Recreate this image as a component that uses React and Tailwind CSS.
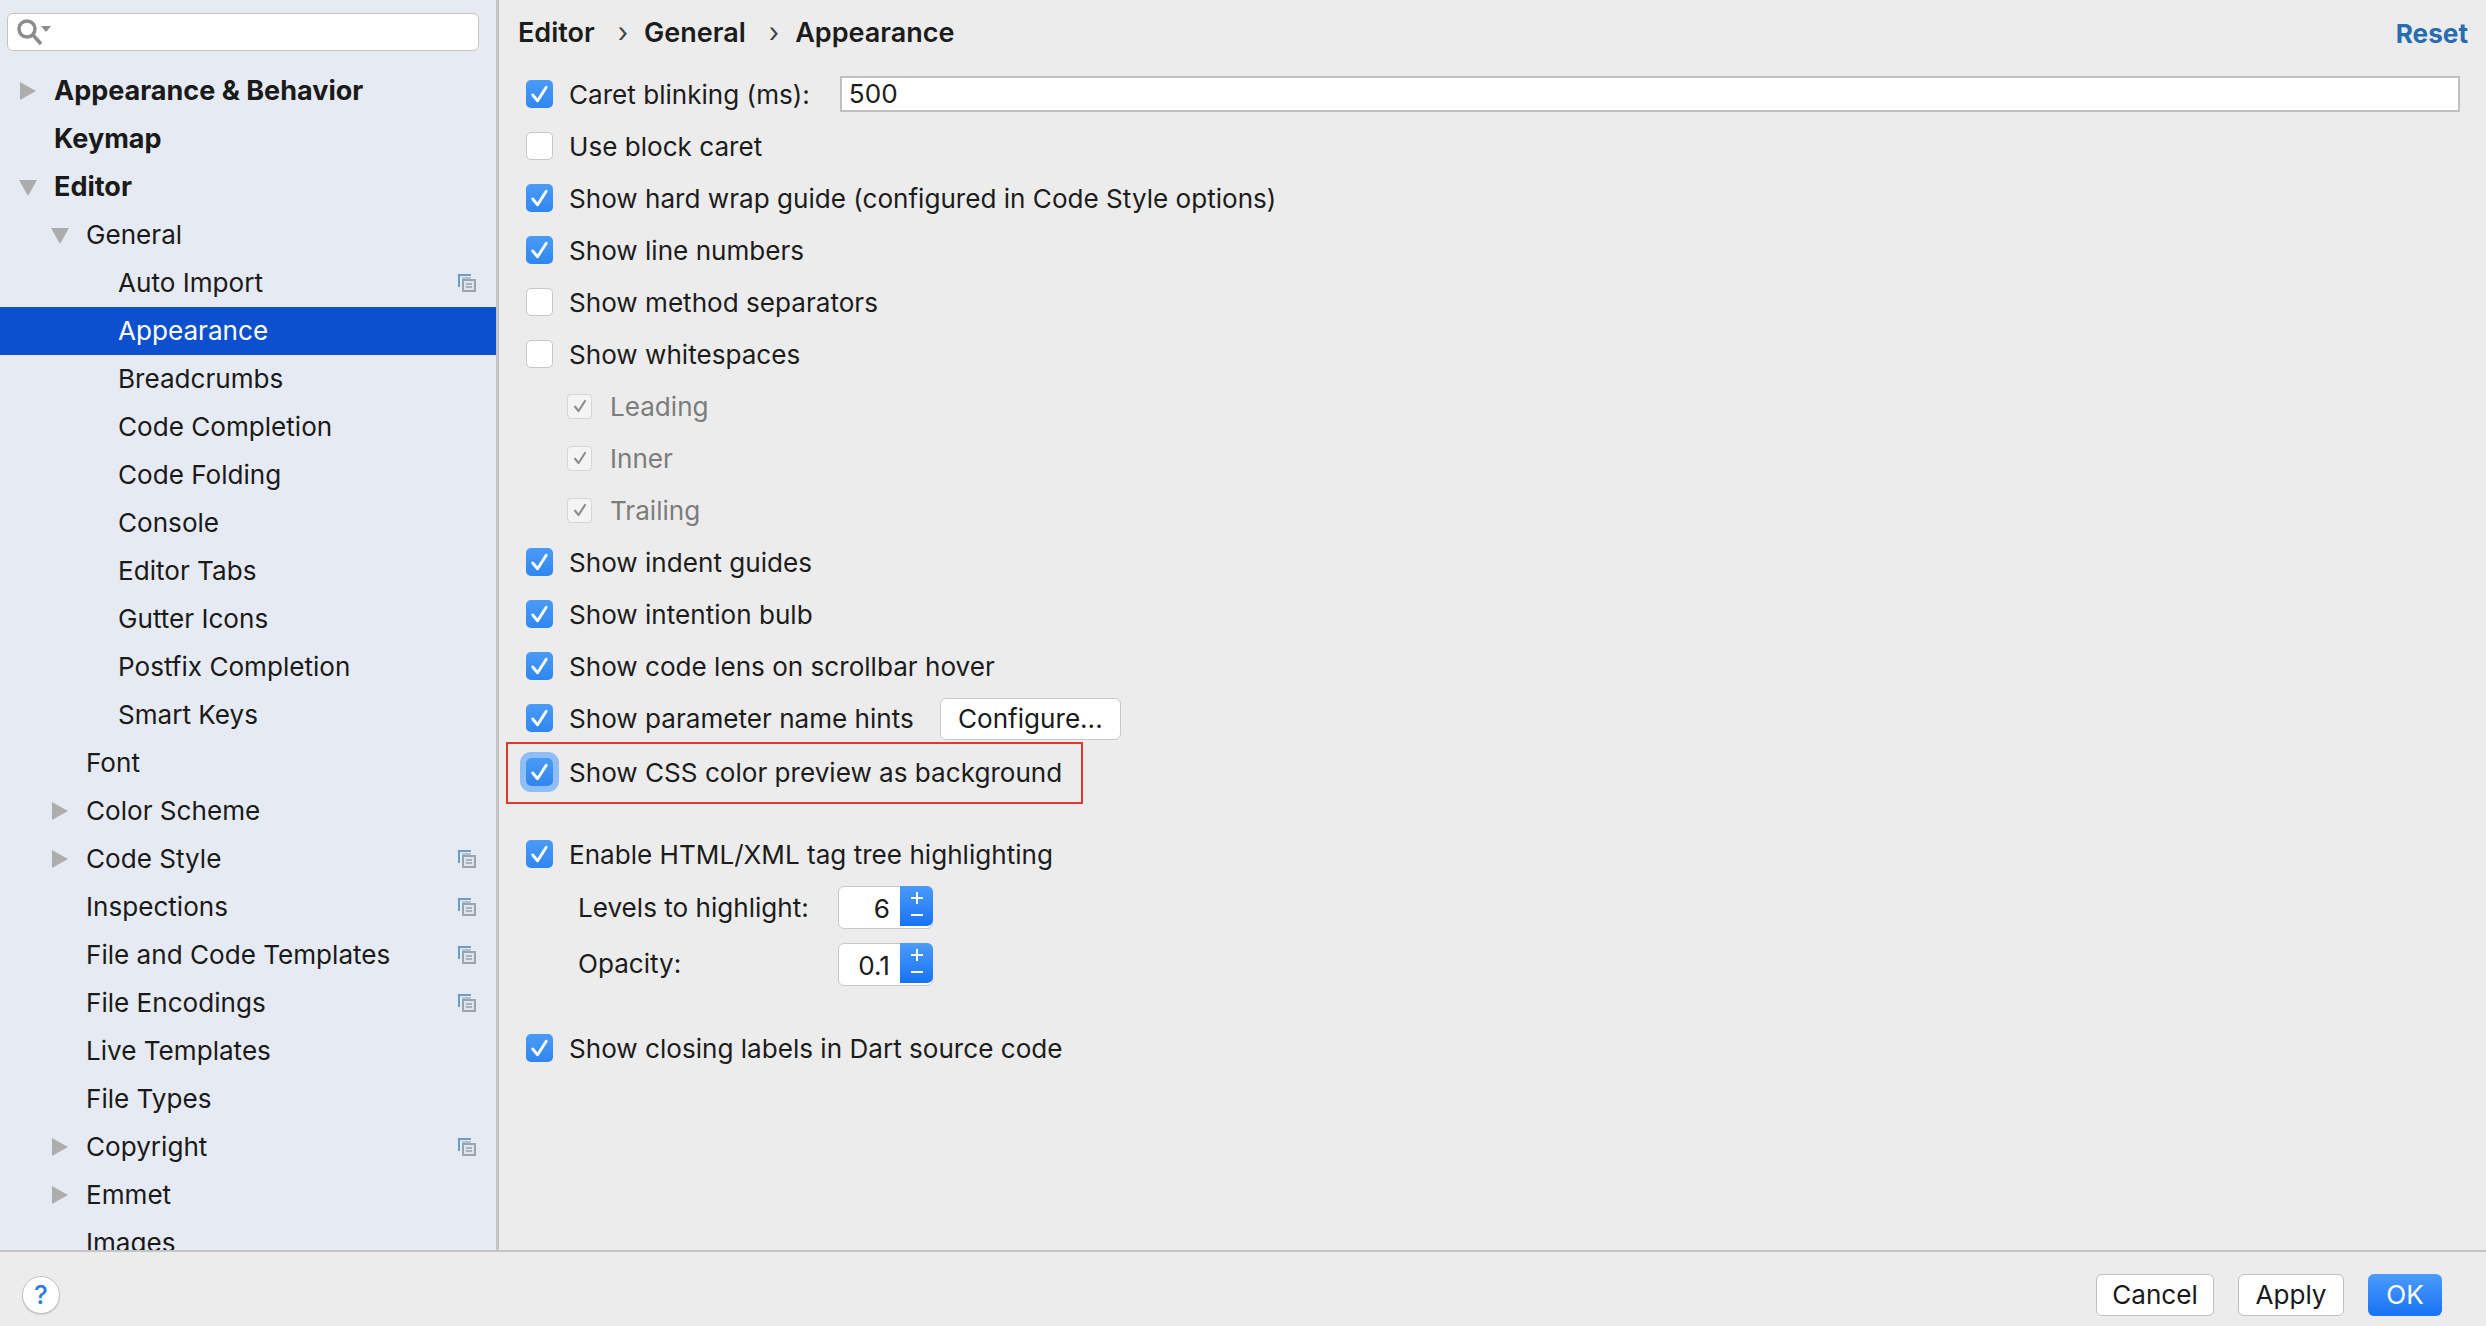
import React from 'react';

const tree = [
  { label: 'Appearance & Behavior', depth: 0, bold: true, arrow: 'right' },
  { label: 'Keymap', depth: 0, bold: true },
  { label: 'Editor', depth: 0, bold: true, arrow: 'down' },
  { label: 'General', depth: 1, arrow: 'down' },
  { label: 'Auto Import', depth: 2, stack: true },
  { label: 'Appearance', depth: 2, selected: true },
  { label: 'Breadcrumbs', depth: 2 },
  { label: 'Code Completion', depth: 2 },
  { label: 'Code Folding', depth: 2 },
  { label: 'Console', depth: 2 },
  { label: 'Editor Tabs', depth: 2 },
  { label: 'Gutter Icons', depth: 2 },
  { label: 'Postfix Completion', depth: 2 },
  { label: 'Smart Keys', depth: 2 },
  { label: 'Font', depth: 1 },
  { label: 'Color Scheme', depth: 1, arrow: 'right' },
  { label: 'Code Style', depth: 1, arrow: 'right', stack: true },
  { label: 'Inspections', depth: 1, stack: true },
  { label: 'File and Code Templates', depth: 1, stack: true },
  { label: 'File Encodings', depth: 1, stack: true },
  { label: 'Live Templates', depth: 1 },
  { label: 'File Types', depth: 1 },
  { label: 'Copyright', depth: 1, arrow: 'right', stack: true },
  { label: 'Emmet', depth: 1, arrow: 'right' },
  { label: 'Images', depth: 1 },
];

function Arrow({ dir }) {
  return (
    <svg width="18" height="18" viewBox="0 0 18 18" className="shrink-0 text-[#adadad]" fill="currentColor">
      {dir === 'right' ? <path d="M1 0 L17 9 L1 18 Z" /> : <path d="M0 2 L18 2 L9 18 Z" />}
    </svg>
  );
}

function StackIcon() {
  return (
    <svg width="18" height="18" viewBox="0 0 18 18" className="shrink-0" fill="none">
      <path d="M1 13 V1 H13" stroke="#6d9ec6" strokeWidth="2" />
      <path d="M4 4 H13" stroke="#6d9ec6" strokeWidth="1" />
      <rect x="5" y="6" width="12" height="11" fill="#dfe3ea" stroke="#9aa5ae" strokeWidth="2" />
      <path d="M8 10 H14 M8 13 H14" stroke="#9aa5ae" strokeWidth="1.5" />
    </svg>
  );
}

function TreeRow({ item }) {
  return (
    <div className={`flex h-[48px] shrink-0 items-center pr-[20px] ${item.selected ? 'bg-[#0c50cf] text-white' : 'text-[#1a1a1a]'}`}>
      <div className={`flex h-full items-center ${item.depth === 0 ? 'w-[54px] pl-[19px]' : item.depth === 1 ? 'w-[86px] pl-[51px]' : 'w-[118px]'}`}>
        {item.arrow && <Arrow dir={item.arrow} />}
      </div>
      <span className={`flex-1 ${item.bold ? 'pt-[1px] text-[27px] font-bold' : 'pb-[1px]'}`}>{item.label}</span>
      {item.stack && <StackIcon />}
    </div>
  );
}

function Check({ color = '#ffffff' }) {
  return (
    <svg width="28" height="28" viewBox="0 0 28 28" fill="none">
      <path d="M7 15 L12 21 L21 7" stroke={color} strokeWidth="3" strokeLinecap="round" strokeLinejoin="round" />
    </svg>
  );
}

function Checkbox({ checked, focus }) {
  if (checked) {
    return (
      <div className={`flex h-[28px] w-[27px] shrink-0 items-center justify-center rounded-[5px] bg-gradient-to-b from-[#4a9bf6] to-[#2f86ef] ${focus ? 'ring-[6px] ring-[#8fbdf6]' : ''}`}>
        <Check />
      </div>
    );
  }
  return <div className="h-[28px] w-[27px] shrink-0 rounded-[5px] border border-[#c6c6c6] bg-white" />;
}

function OptionRow({ label, checked, className = '', children, focus }) {
  return (
    <div className={`flex h-[52px] items-center ${className}`}>
      <Checkbox checked={checked} focus={focus} />
      <span className="ml-[16px] whitespace-nowrap pt-[2px]">{label}</span>
      {children}
    </div>
  );
}

function SubOption({ label }) {
  return (
    <div className="flex h-[52px] items-center pl-[41px] text-[#7c7c7c]">
      <div className="flex h-[25px] w-[25px] shrink-0 items-center justify-center rounded-[4px] border border-[#d6d6d6] bg-[#f4f4f4]">
        <svg width="20" height="20" viewBox="0 0 28 28" fill="none">
          <path d="M7 15 L12 21 L21 7" stroke="#8d8d8d" strokeWidth="3" strokeLinecap="round" strokeLinejoin="round" />
        </svg>
      </div>
      <span className="ml-[18px] pt-[2px]">{label}</span>
    </div>
  );
}

function Spinner({ value }) {
  return (
    <div className="relative h-[43px] w-[95px] rounded-[6px] border border-[#c8c8c8] bg-white">
      <span className="absolute right-[42px] top-[6px] leading-[32px]">{value}</span>
      <div className="absolute right-[-1px] top-[-1px] flex h-[40px] w-[33px] flex-col items-center justify-center rounded-r-[6px] bg-gradient-to-b from-[#4a9bfb] to-[#1672f5]">
        <svg width="14" height="32" viewBox="0 0 14 32" fill="none" stroke="#ffffff" strokeWidth="2">
          <path d="M1 8 H13 M7 2 V14 M1 25 H13" />
        </svg>
      </div>
    </div>
  );
}

function Button({ children, className = '' }) {
  return (
    <button className={`flex h-[42px] items-center justify-center rounded-[6px] border border-[#bfbfbf] bg-white text-[#1a1a1a] ${className}`}>
      {children}
    </button>
  );
}

export default function App() {
  return (
    <div className="flex h-[1326px] w-[2486px] flex-col overflow-hidden bg-[#ececec] text-[26.1px] text-[#1c1c1c]" style={{ fontFamily: 'Inter, "Liberation Sans", sans-serif' }}>
      <div className="flex h-[1252px] shrink-0 border-b-2 border-[#c4c4c4]">
        {/* Settings tree */}
        <aside className="flex w-[499px] shrink-0 flex-col overflow-hidden border-r-[3px] border-[#c4c4c4] bg-[#e6eaf2]">
          <div className="h-[67px] shrink-0 pl-[7px] pr-[17px] pt-[13px]">
            <div className="flex h-[38px] items-center rounded-[6px] border border-[#c4c4c4] bg-white pl-[8px]">
              <svg width="36" height="28" viewBox="0 0 36 28" fill="none">
                <circle cx="11" cy="11" r="8" stroke="#8c8c8c" strokeWidth="3.5" />
                <path d="M17 17 L25 26" stroke="#8c8c8c" strokeWidth="3.5" />
                <path d="M25 8 H35 L30 14 Z" fill="#8c8c8c" />
              </svg>
            </div>
          </div>
          {tree.map((item) => <TreeRow key={item.label} item={item} />)}
        </aside>

        {/* Appearance page */}
        <main className="flex min-w-0 flex-1 flex-col">
          <header className="flex h-[68px] shrink-0 items-center pb-[1px] pl-[19px] pr-[18px] text-[27px] font-semibold">
            <span>Editor</span>
            <span className="ml-[23px] mr-[16px] font-normal text-[#444444]">›</span>
            <span>General</span>
            <span className="ml-[23px] mr-[16px] font-normal text-[#444444]">›</span>
            <span>Appearance</span>
            <span className="ml-auto text-[26.2px] font-bold text-[#2a6cb0]">Reset</span>
          </header>

          <div className="flex flex-col pl-[27px]">
            <OptionRow label="Caret blinking (ms):" checked>
              <div className="ml-[30px] flex h-[36px] w-[1620px] items-center border-2 border-[#c0c0c0] bg-white pl-[7px]">500</div>
            </OptionRow>
            <OptionRow label="Use block caret" />
            <OptionRow label="Show hard wrap guide (configured in Code Style options)" checked />
            <OptionRow label="Show line numbers" checked />
            <OptionRow label="Show method separators" />
            <OptionRow label="Show whitespaces" />
            <SubOption label="Leading" />
            <SubOption label="Inner" />
            <SubOption label="Trailing" />
            <OptionRow label="Show indent guides" checked />
            <OptionRow label="Show intention bulb" checked />
            <OptionRow label="Show code lens on scrollbar hover" checked />
            <OptionRow label="Show parameter name hints" checked>
              <Button className="ml-[26px] mt-[1px] h-[40px] w-[181px] border-[#c8c8c8]">Configure...</Button>
            </OptionRow>
            <div className="relative mt-[2px]">
              <OptionRow label="Show CSS color preview as background" checked focus />
              <div className="absolute left-[-20px] top-[-4px] h-[62px] w-[577px] border-2 border-[#e0392c]" />
            </div>
            <OptionRow className="mt-[30px]" label="Enable HTML/XML tag tree highlighting" checked />
            <div className="flex h-[54px] items-center pl-[52px]">
              <span className="w-[260px] pt-[2px]">Levels to highlight:</span>
              <Spinner value="6" />
            </div>
            <div className="mt-[3px] flex h-[54px] items-center pl-[52px]">
              <span className="w-[260px]">Opacity:</span>
              <Spinner value="0.1" />
            </div>
            <OptionRow className="mt-[31px]" label="Show closing labels in Dart source code" checked />
          </div>
        </main>
      </div>

      <footer className="flex flex-1 items-center justify-between pl-[22px] pr-[44px] pt-[12px]">
        <div className="flex h-[38px] w-[38px] items-center justify-center rounded-full border border-[#c4c4c4] bg-white font-medium text-[#2a7de1] shadow-[0_1px_1px_rgba(0,0,0,0.15)]">?</div>
        <div className="flex gap-[24px]">
          <Button className="w-[118px]">Cancel</Button>
          <Button className="w-[106px]">Apply</Button>
          <Button className="w-[74px] border-none bg-gradient-to-b from-[#4a9bfb] to-[#1672f5] text-white">OK</Button>
        </div>
      </footer>
    </div>
  );
}
